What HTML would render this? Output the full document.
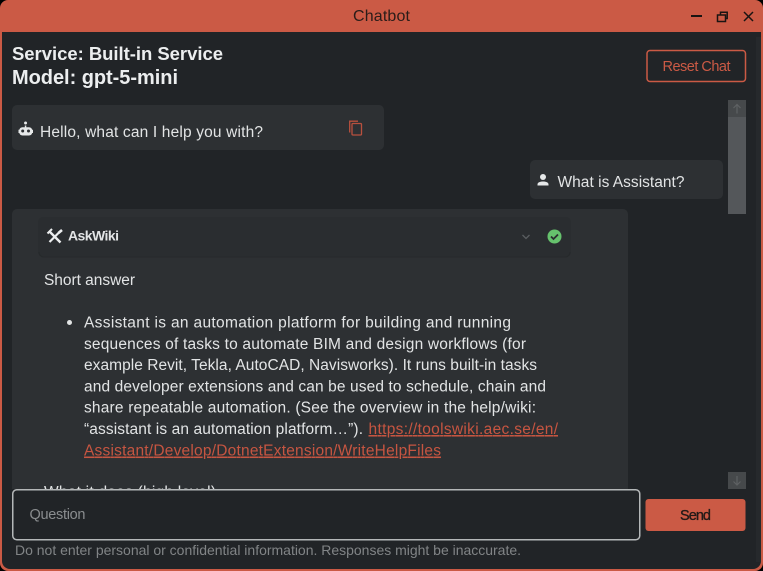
<!DOCTYPE html>
<html><head><meta charset="utf-8"><style>
html,body{margin:0;padding:0;background:#000;width:763px;height:571px;overflow:hidden}
svg{display:block}
text{font-family:"Liberation Sans",sans-serif;font-size:15.5px;fill:#e2e4e5}
.b{font-weight:700;fill:#eceeef}
.l{fill:#c65541;text-decoration:underline}
</style></head><body>
<svg width="763" height="571" viewBox="0 0 763 571" xmlns="http://www.w3.org/2000/svg">
<rect x="0" y="0" width="763" height="571" rx="8" fill="#cb5a45"/>
<path d="M2 32H761V561a8 8 0 0 1-8 8H10a8 8 0 0 1-8-8Z" fill="#212427"/>
<rect x="756" y="37" width="5" height="525" fill="#26292c"/>
<text x="353" y="21" textLength="57" lengthAdjust="spacing" style="fill:#2a1c19;font-size:16px">Chatbot</text>
<rect x="691" y="15" width="11" height="2" fill="#1a1412"/>
<g fill="none" stroke="#1a1412" stroke-width="1.5"><rect x="717.5" y="15" width="8" height="6.5"/><path d="M720.5 15V12.2H727.2V18.5H725.5"/><path d="M744 12L753 21M753 12L744 21"/></g>
<text class="b" x="12" y="60" textLength="211" lengthAdjust="spacing" style="font-size:18.5px">Service: Built-in Service</text>
<text class="b" x="12" y="84" textLength="166" lengthAdjust="spacing" style="font-size:20px">Model: gpt-5-mini</text>
<rect x="647" y="50.500" width="98.500" height="31" rx="3" fill="none" stroke="#cb5a45" stroke-width="1.500"/>
<text x="662.500" y="71" textLength="68" lengthAdjust="spacing" style="fill:#cb5a45;font-size:14.500px">Reset Chat</text>
<rect x="12" y="105" width="372" height="45" rx="5" fill="#2d3033"/>
<path d="M25.500 124.500a1.500 1.500 0 1 1 .1 0ZM24.800 125.500h1.500v1.700h2.700a3.500 3.500 0 0 1 3.200 2.500h.8v3.300h-.8a3.500 3.500 0 0 1-3.200 2.500h-6.500a3.500 3.500 0 0 1-3.200-2.500h-.8v-3.300h.8a3.500 3.500 0 0 1 3.200-2.500h2.300Z" fill="#e6e8e9"/>
<circle cx="22.700" cy="131" r="1.500" fill="#2d3033"/><circle cx="28.500" cy="131" r="1.500" fill="#2d3033"/>
<text x="40" y="137" textLength="223" lengthAdjust="spacing">Hello, what can I help you with?</text>
<g fill="none" stroke="#b8503e" stroke-width="1.300"><rect x="352" y="123.500" width="9.500" height="11.500" rx="1"/><path d="M349.700 132.500V121.200H358"/></g>
<rect x="530" y="160" width="193" height="39" rx="5" fill="#2d3033"/>
<circle cx="543" cy="177" r="3" fill="#e6e8e9"/><path d="M537.500 185.500v-1.300c0-1.800 3-2.700 5.500-2.700s5.500.9 5.500 2.700v1.300Z" fill="#e6e8e9"/>
<text x="557.500" y="187" textLength="127" lengthAdjust="spacing">What is Assistant?</text>
<rect x="728" y="100" width="18" height="114" fill="#54575a"/>
<rect x="728" y="100" width="18" height="17" fill="#46494b"/>
<path d="M737 113.500V104.500M733.500 108L737 104.500L740.500 108" fill="none" stroke="#5e6163" stroke-width="1.200"/>
<rect x="728" y="472" width="18" height="17" fill="#46494b"/>
<path d="M737 476V485M733.500 481.500L737 485L740.500 481.500" fill="none" stroke="#5e6163" stroke-width="1.200"/>
<path d="M12 489V214a5 5 0 0 1 5-5H623a5 5 0 0 1 5 5V489Z" fill="#2d3033"/>
<rect x="38" y="217" width="533" height="40" rx="5" fill="#2a2d30"/>
<path d="M39 252a5 5 0 0 0 4 5H566a5 5 0 0 0 4-5" fill="none" stroke="#26292b" stroke-width="1"/>
<g stroke="#eceeef" fill="none"><path d="M49.500 231.500L60.500 242.500" stroke-width="2.400"/><path d="M60.500 231L49.500 242" stroke-width="2.200"/><path d="M47.500 233.500L52 229" stroke-width="2"/><path d="M58.500 233L62 230" stroke-width="2.600"/></g>
<text x="68" y="240.500" textLength="51" lengthAdjust="spacing" style="font-size:14px;font-weight:700">AskWiki</text>
<path d="M522.500 235L526 238.500L529.500 235" fill="none" stroke="#5a5d60" stroke-width="1.300"/>
<circle cx="554.500" cy="236.500" r="7" fill="#66c26d"/>
<path d="M551 236.500L553.500 239L558 234.500" fill="none" stroke="#2a2d30" stroke-width="1.800"/>
<text x="44" y="285" textLength="91" lengthAdjust="spacing">Short answer</text>
<circle cx="69.500" cy="322.500" r="2.500" fill="#e2e4e5"/>
<text x="84" y="327.500" textLength="427" lengthAdjust="spacing">Assistant is an automation platform for building and running</text>
<text x="84" y="349" textLength="442" lengthAdjust="spacing">sequences of tasks to automate BIM and design workflows (for</text>
<text x="84" y="370" textLength="453" lengthAdjust="spacing">example Revit, Tekla, AutoCAD, Navisworks). It runs built-in tasks</text>
<text x="84" y="391.500" textLength="462" lengthAdjust="spacing">and developer extensions and can be used to schedule, chain and</text>
<text x="84" y="412.500" textLength="452" lengthAdjust="spacing">share repeatable automation. (See the overview in the help/wiki:</text>
<text x="84" y="434" textLength="279" lengthAdjust="spacing">“assistant is an automation platform…”).</text>
<text class="l" x="368.500" y="434" textLength="189.500" lengthAdjust="spacing">https://toolswiki.aec.se/en/</text>
<text class="l" x="84" y="455.500" textLength="357" lengthAdjust="spacing">Assistant/Develop/DotnetExtension/WriteHelpFiles</text>
<text x="44" y="497" textLength="172" lengthAdjust="spacing">What it does (high level)</text>
<rect x="12.750" y="489.750" width="627" height="50" rx="4" fill="#212427" stroke="#b4b7b8" stroke-width="1.500"/>
<text x="29.500" y="519" textLength="56" lengthAdjust="spacing" style="fill:#8a8d8f;font-size:14.500px">Question</text>
<rect x="645.500" y="499" width="100" height="32" rx="3" fill="#cb5a45"/>
<text x="680" y="520" textLength="31" lengthAdjust="spacing" style="fill:#231a18;font-size:14.500px;stroke:#231a18;stroke-width:.35">Send</text>
<text x="15" y="555" textLength="506" lengthAdjust="spacing" style="fill:#818486;font-size:14px">Do not enter personal or confidential information. Responses might be inaccurate.</text>
</svg>
</body></html>
